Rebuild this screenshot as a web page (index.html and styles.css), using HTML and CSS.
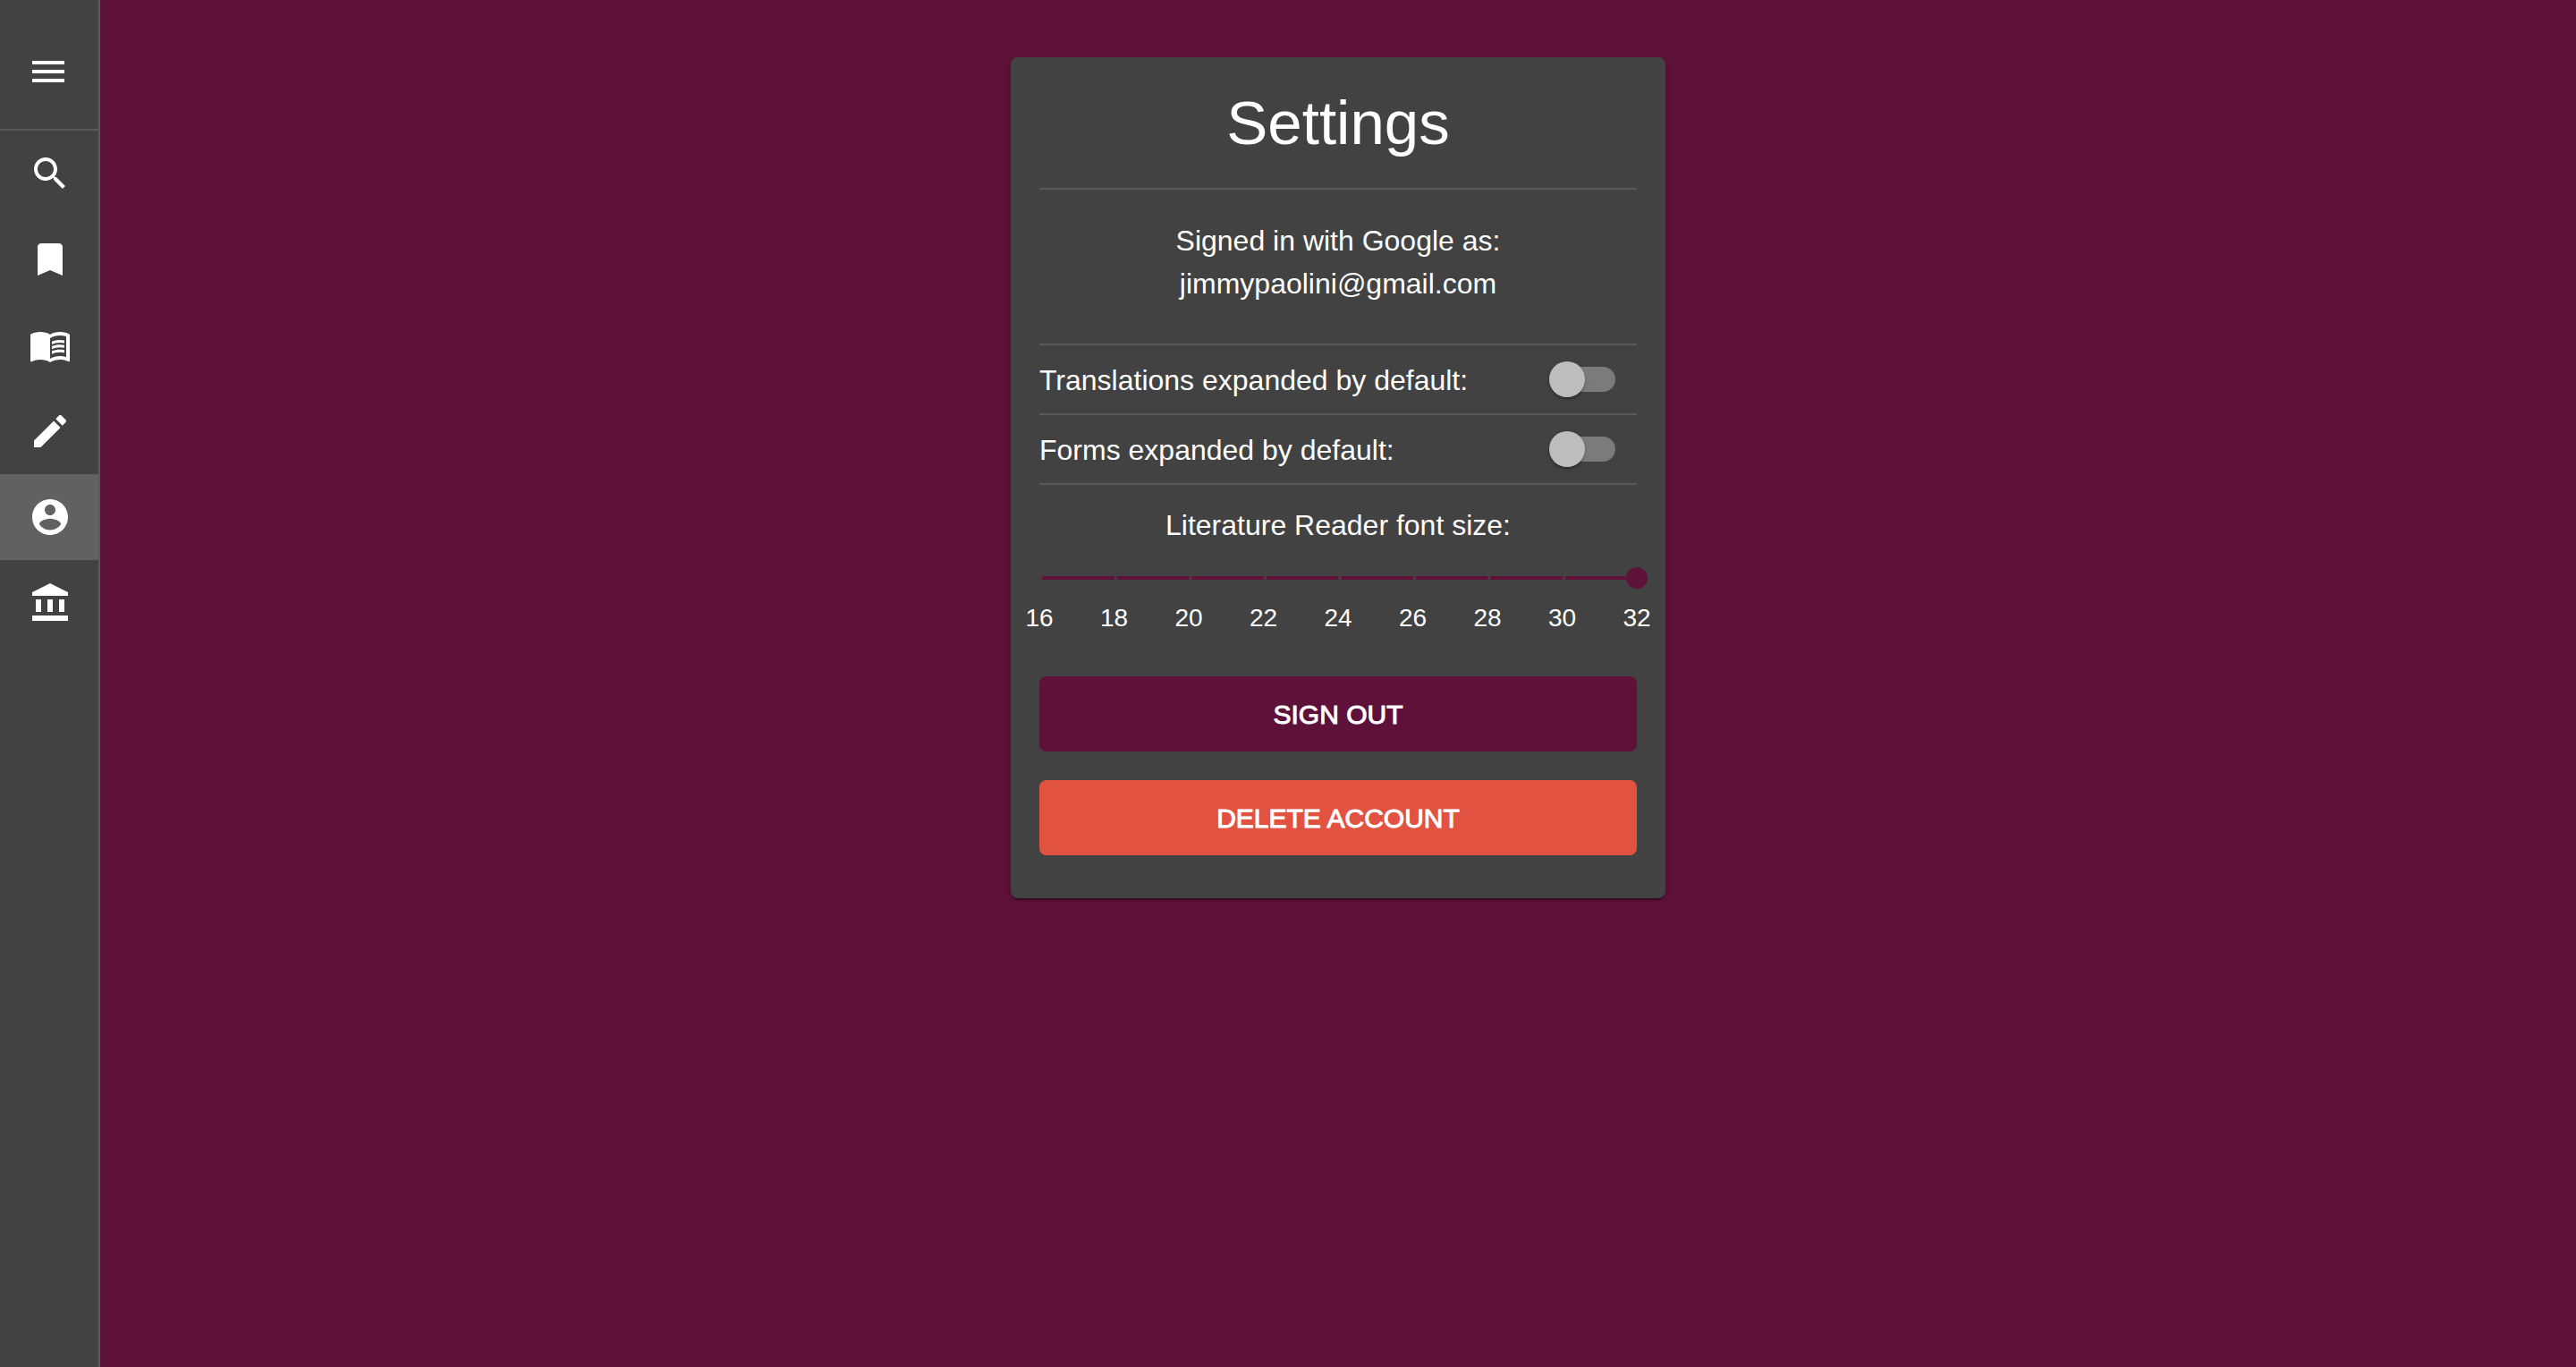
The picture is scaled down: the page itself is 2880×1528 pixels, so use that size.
FILE: index.html
```html
<!DOCTYPE html>
<html lang="en">
<head>
<meta charset="utf-8">
<meta name="viewport" content="width=device-width, initial-scale=1">
<title>Settings</title>
<link rel="stylesheet" href="styles.css">
</head>
<body>
<div class="app">
  <nav class="sidebar" aria-label="Main">
    <div class="sidebar-head">
      <button class="menu-button" type="button" aria-label="Menu">
        <svg class="icon" viewBox="0 0 24 24"><path d="M3 18h18v-2H3v2zm0-5h18v-2H3v2zm0-7v2h18V6H3z"/></svg>
      </button>
    </div>
    <a class="nav-item" href="#search" aria-label="Search">
      <svg class="icon" viewBox="0 0 24 24"><path d="M15.5 14h-.79l-.28-.27C15.41 12.59 16 11.11 16 9.5 16 5.91 13.09 3 9.5 3S3 5.91 3 9.5 5.91 16 9.5 16c1.61 0 3.09-.59 4.23-1.57l.27.28v.79l5 4.99L20.49 19l-4.99-5zm-6 0C7.01 14 5 11.99 5 9.5S7.01 5 9.5 5 14 7.01 14 9.5 11.99 14 9.5 14z"/></svg>
    </a>
    <a class="nav-item" href="#saved" aria-label="Saved">
      <svg class="icon" viewBox="0 0 24 24"><path d="M17 3H7c-1.1 0-2 .9-2 2v16l7-3 7 3V5c0-1.1-.9-2-2-2z"/></svg>
    </a>
    <a class="nav-item" href="#read" aria-label="Literature">
      <svg class="icon" viewBox="0 0 24 24"><path d="M21 5c-1.11-.35-2.33-.5-3.5-.5-1.95 0-4.05.4-5.5 1.5-1.45-1.1-3.55-1.5-5.5-1.5S2.45 4.9 1 6v14.65c0 .25.25.5.5.5.1 0 .15-.05.25-.05C3.1 20.45 5.05 20 6.5 20c1.95 0 4.05.4 5.5 1.5 1.35-.85 3.8-1.5 5.5-1.5 1.65 0 3.35.3 4.75 1.05.1.05.15.05.25.05.25 0 .5-.25.5-.5V6c-.6-.45-1.25-.75-2-1zm0 13.5c-1.1-.35-2.3-.5-3.5-.5-1.7 0-4.15.65-5.5 1.5V8c1.35-.85 3.8-1.5 5.5-1.5 1.2 0 2.4.15 3.5.5v11.5z"/><path d="M17.5 10.5c.88 0 1.73.09 2.5.26V9.24c-.79-.15-1.64-.24-2.5-.24-1.7 0-3.24.29-4.5.83v1.66c1.13-.64 2.7-.99 4.5-.99zM13 12.49v1.66c1.13-.64 2.7-.99 4.5-.99.88 0 1.73.09 2.5.26V11.9c-.79-.15-1.64-.24-2.5-.24-1.7 0-3.24.3-4.5.83zM17.5 14.33c-1.7 0-3.24.29-4.5.83v1.66c1.13-.64 2.7-.99 4.5-.99.88 0 1.73.09 2.5.26v-1.52c-.79-.16-1.64-.24-2.5-.24z"/></svg>
    </a>
    <a class="nav-item" href="#write" aria-label="Write">
      <svg class="icon" viewBox="0 0 24 24"><path d="M3 17.25V21h3.75L17.81 9.94l-3.75-3.75L3 17.25zM20.71 7.04c.39-.39.39-1.02 0-1.41l-2.34-2.34a.9959.9959 0 00-1.41 0l-1.83 1.83 3.75 3.75 1.83-1.83z"/></svg>
    </a>
    <a class="nav-item nav-item-active" href="#account" aria-label="Account" aria-current="page">
      <svg class="icon" viewBox="0 0 24 24"><path d="M12 2C6.48 2 2 6.48 2 12s4.48 10 10 10 10-4.48 10-10S17.52 2 12 2zm0 3c1.66 0 3 1.34 3 3s-1.34 3-3 3-3-1.34-3-3 1.34-3 3-3zm0 14.2c-2.5 0-4.71-1.28-6-3.22.03-1.99 4-3.08 6-3.08 1.99 0 5.97 1.09 6 3.08-1.29 1.94-3.5 3.22-6 3.22z"/></svg>
    </a>
    <a class="nav-item" href="#about" aria-label="About">
      <svg class="icon" viewBox="0 0 24 24"><path d="M4 10h3v7H4zM10.5 10h3v7h-3zM2 19h20v3H2zM17 10h3v7h-3zM12 1L2 6v2h20V6z"/></svg>
    </a>
  </nav>
  <main class="main">
    <section class="card">
      <h1 class="title">Settings</h1>
      <p class="account">Signed in with Google as:<br>jimmypaolini@gmail.com</p>
      <div class="option">
        <label for="translations">Translations expanded by default:</label>
        <input class="switch" type="checkbox" role="switch" id="translations">
      </div>
      <div class="option">
        <label for="forms">Forms expanded by default:</label>
        <input class="switch" type="checkbox" role="switch" id="forms">
      </div>
      <div class="font-size">
        <label for="font-size">Literature Reader font size:</label>
        <div class="slider">
          <input class="range" type="range" id="font-size" min="16" max="32" step="2" value="32">
        </div>
        <div class="marks">
          <span class="mark">16</span><span class="mark">18</span><span class="mark">20</span><span class="mark">22</span><span class="mark">24</span><span class="mark">26</span><span class="mark">28</span><span class="mark">30</span><span class="mark">32</span>
        </div>
      </div>
      <div class="actions">
        <button class="button button-primary" type="button">SIGN OUT</button>
        <button class="button button-danger" type="button">DELETE ACCOUNT</button>
      </div>
    </section>
  </main>
</div>
</body>
</html>
```
FILE: styles.css
```css
:root {
  --wine: #5e1139;
  --paper: #424242;
  --divider: #595959;
  --danger: #e25241;
}

* {
  box-sizing: border-box;
}

body {
  margin: 0;
  background: var(--wine);
  color: #fff;
  font-family: "Liberation Sans", Helvetica, Arial, sans-serif;
  font-size: 32px;
  line-height: 48px;
}

.app {
  display: flex;
  min-height: 100vh;
}

.sidebar {
  flex: none;
  display: flex;
  flex-direction: column;
  width: 112px;
  background: var(--paper);
  border-right: 2px solid var(--divider);
}

.sidebar-head {
  padding: 44px 18px 28px;
  border-bottom: 2px solid var(--divider);
}

.menu-button {
  display: block;
  padding: 12px;
  border: 0;
  background: none;
  color: #fff;
}

.icon {
  display: block;
  width: 48px;
  height: 48px;
  fill: currentColor;
}

.nav-item {
  padding: 24px 32px;
  color: #fff;
}

.nav-item-active {
  background: #616161;
}

.main {
  flex: 1;
  display: flex;
  justify-content: center;
  align-items: flex-start;
  padding: 64px 32px;
}

.card {
  width: 100%;
  max-width: 732px;
  padding: 32px 32px 48px;
  border-radius: 8px;
  background: var(--paper);
  box-shadow: 0 4px 2px -2px rgba(0, 0, 0, 0.2), 0 2px 2px 0 rgba(0, 0, 0, 0.14), 0 2px 6px 0 rgba(0, 0, 0, 0.12);
}

.title {
  margin: 0;
  padding-bottom: 30px;
  border-bottom: 2px solid var(--divider);
  font-size: 69px;
  font-weight: 400;
  line-height: 84px;
  text-align: center;
}

.account {
  margin: 0;
  padding: 33px 0 43px;
  border-bottom: 2px solid var(--divider);
  text-align: center;
}

.option {
  display: flex;
  justify-content: space-between;
  align-items: center;
  border-bottom: 2px solid var(--divider);
}

.option label {
  padding-top: 2px;
}

.switch {
  appearance: none;
  flex: none;
  display: flex;
  align-items: center;
  width: 68px;
  height: 28px;
  margin: 24px;
  border-radius: 14px;
  background: #7b7b7b;
}

.switch::before {
  content: "";
  flex: none;
  width: 40px;
  height: 40px;
  margin-left: -6px;
  border-radius: 50%;
  background: #bdbdbd;
  box-shadow: 0 4px 2px -2px rgba(0, 0, 0, 0.2), 0 2px 2px 0 rgba(0, 0, 0, 0.14), 0 2px 6px 0 rgba(0, 0, 0, 0.12);
}

.switch:checked::before {
  margin-left: 34px;
}

.font-size {
  display: flex;
  flex-direction: column;
  padding-top: 21px;
  text-align: center;
}

.slider {
  display: flex;
  height: 24px;
  margin: 23px 0 13px;
  background:
    radial-gradient(circle at 2px 50%, #4b3a41 2px, transparent 2px) 0 0 / 12.5% 100% repeat-x,
    linear-gradient(var(--wine), var(--wine)) center / 100% 4px no-repeat;
}

.range {
  appearance: none;
  flex: 1;
  height: 24px;
  margin: 0 -12px;
  background: none;
}

.range::-webkit-slider-thumb {
  appearance: none;
  width: 24px;
  height: 24px;
  border-radius: 50%;
  background: var(--wine);
}

.marks {
  display: flex;
  justify-content: space-between;
  margin: 0 -16px;
  font-size: 28px;
  line-height: 40px;
}

.mark {
  width: 32px;
}

.actions {
  display: flex;
  flex-direction: column;
  gap: 32px;
  margin-top: 45px;
}

.button {
  height: 84px;
  padding: 2px 16px 0;
  border: 0;
  border-radius: 8px;
  color: #fff;
  font-family: inherit;
  font-size: 30px;
  line-height: 52px;
  -webkit-text-stroke: 1px currentColor;
}

.button-primary {
  background: var(--wine);
}

.button-danger {
  background: var(--danger);
}
```
